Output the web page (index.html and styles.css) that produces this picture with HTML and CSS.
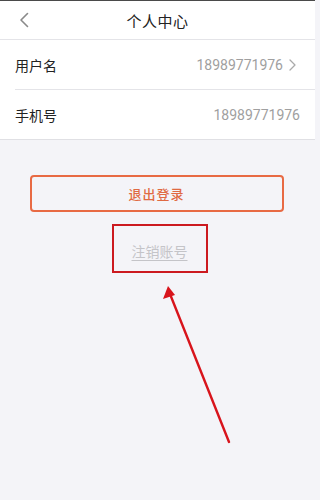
FILE: index.html
```html
<!DOCTYPE html>
<html lang="zh-CN">
<head>
<meta charset="utf-8">
<title>个人中心</title>
<link rel="stylesheet" href="styles.css">
</head>
<body>
<div class="page">
  <header class="topbar">
    <span class="back">
      <svg width="10" height="16" viewBox="0 0 10 16"><path d="M8.5 1.5 L2 8 L8.5 14.5" fill="none" stroke="#8a8a8a" stroke-width="1.6" stroke-linecap="round" stroke-linejoin="round"/></svg>
    </span>
    <h1 class="title">个人中心</h1>
  </header>
  <section class="list">
    <div class="row">
      <span class="label">用户名</span>
      <span class="value">18989771976
        <svg class="chev" width="7" height="12" viewBox="0 0 7 12"><path d="M1 1 L6 6 L1 11" fill="none" stroke="#aaaaaa" stroke-width="1.3" stroke-linecap="round" stroke-linejoin="round"/></svg>
      </span>
    </div>
    <div class="row">
      <span class="label">手机号</span>
      <span class="value">18989771976</span>
    </div>
  </section>
  <div class="actions">
    <button class="logout">退出登录</button>
    <div class="cancel-box"><a class="cancel">注销账号</a></div>
  </div>
  <svg class="arrow" width="315" height="500" viewBox="0 0 315 500">
    <line x1="229" y1="442" x2="170" y2="294" stroke="#d8141c" stroke-width="2.4" stroke-linecap="round"/>
    <polygon points="168,286 163,299 175,295" fill="#d8141c"/>
  </svg>
</div>
</body>
</html>
```
FILE: styles.css
```css
* { box-sizing: border-box; }
html, body { margin: 0; padding: 0; }
body {
  font-family: Roboto, "Noto Sans CJK SC", sans-serif;
  background: #f4f4f8;
  width: 315px;
  height: 500px;
  overflow: hidden;
}
.page { position: relative; height: 500px; }
.topbar {
  height: 40px;
  background: #fff;
  border-top: 1px solid #4a4a4a;
  border-bottom: 1px solid #e4e4e8;
  display: flex;
  align-items: center;
  justify-content: center;
  position: relative;
}
.back {
  position: absolute;
  left: 19px;
  top: 11px;
  display: flex;
}
.title {
  margin: 0;
  font-size: 15px;
  font-weight: normal;
  color: #222;
  letter-spacing: 0.5px;
}
.list {
  background: #fff;
  padding-left: 15px;
  border-bottom: 1px solid #e0e0e4;
}
.row {
  height: 49px;
  display: flex;
  align-items: center;
  justify-content: space-between;
  padding-right: 15px;
}
.row + .row { border-top: 1px solid #e4e4e8; height: 50px; }
.label { font-size: 14px; color: #222; }
.value {
  font-size: 14px;
  color: #a0a0a0;
  display: flex;
  align-items: center;
  gap: 6px;
}
.row:first-child { padding-right: 19px; }
.actions {
  display: flex;
  flex-direction: column;
  align-items: center;
  padding-top: 35px;
}
.logout {
  width: 254px;
  height: 37px;
  margin-left: -2px;
  border: 2px solid #e86a44;
  border-radius: 4px;
  background: transparent;
  color: #e06a42;
  font-family: "Noto Sans CJK SC", sans-serif;
  font-size: 13px;
  font-weight: 500;
  letter-spacing: 1px;
}
.cancel-box {
  margin-top: 12px;
  width: 96px;
  height: 49px;
  margin-left: 4px;
  border: 2px solid #cc1a20;
  display: flex;
  align-items: center;
  justify-content: center;
}
.cancel {
  font-family: "Noto Sans CJK SC", sans-serif;
  font-size: 14px;
  color: #c4c4c8;
  text-decoration: underline;
  text-underline-offset: 3px;
  margin-top: 4px;
}
.arrow { position: absolute; left: 0; top: 0; pointer-events: none; }
```
